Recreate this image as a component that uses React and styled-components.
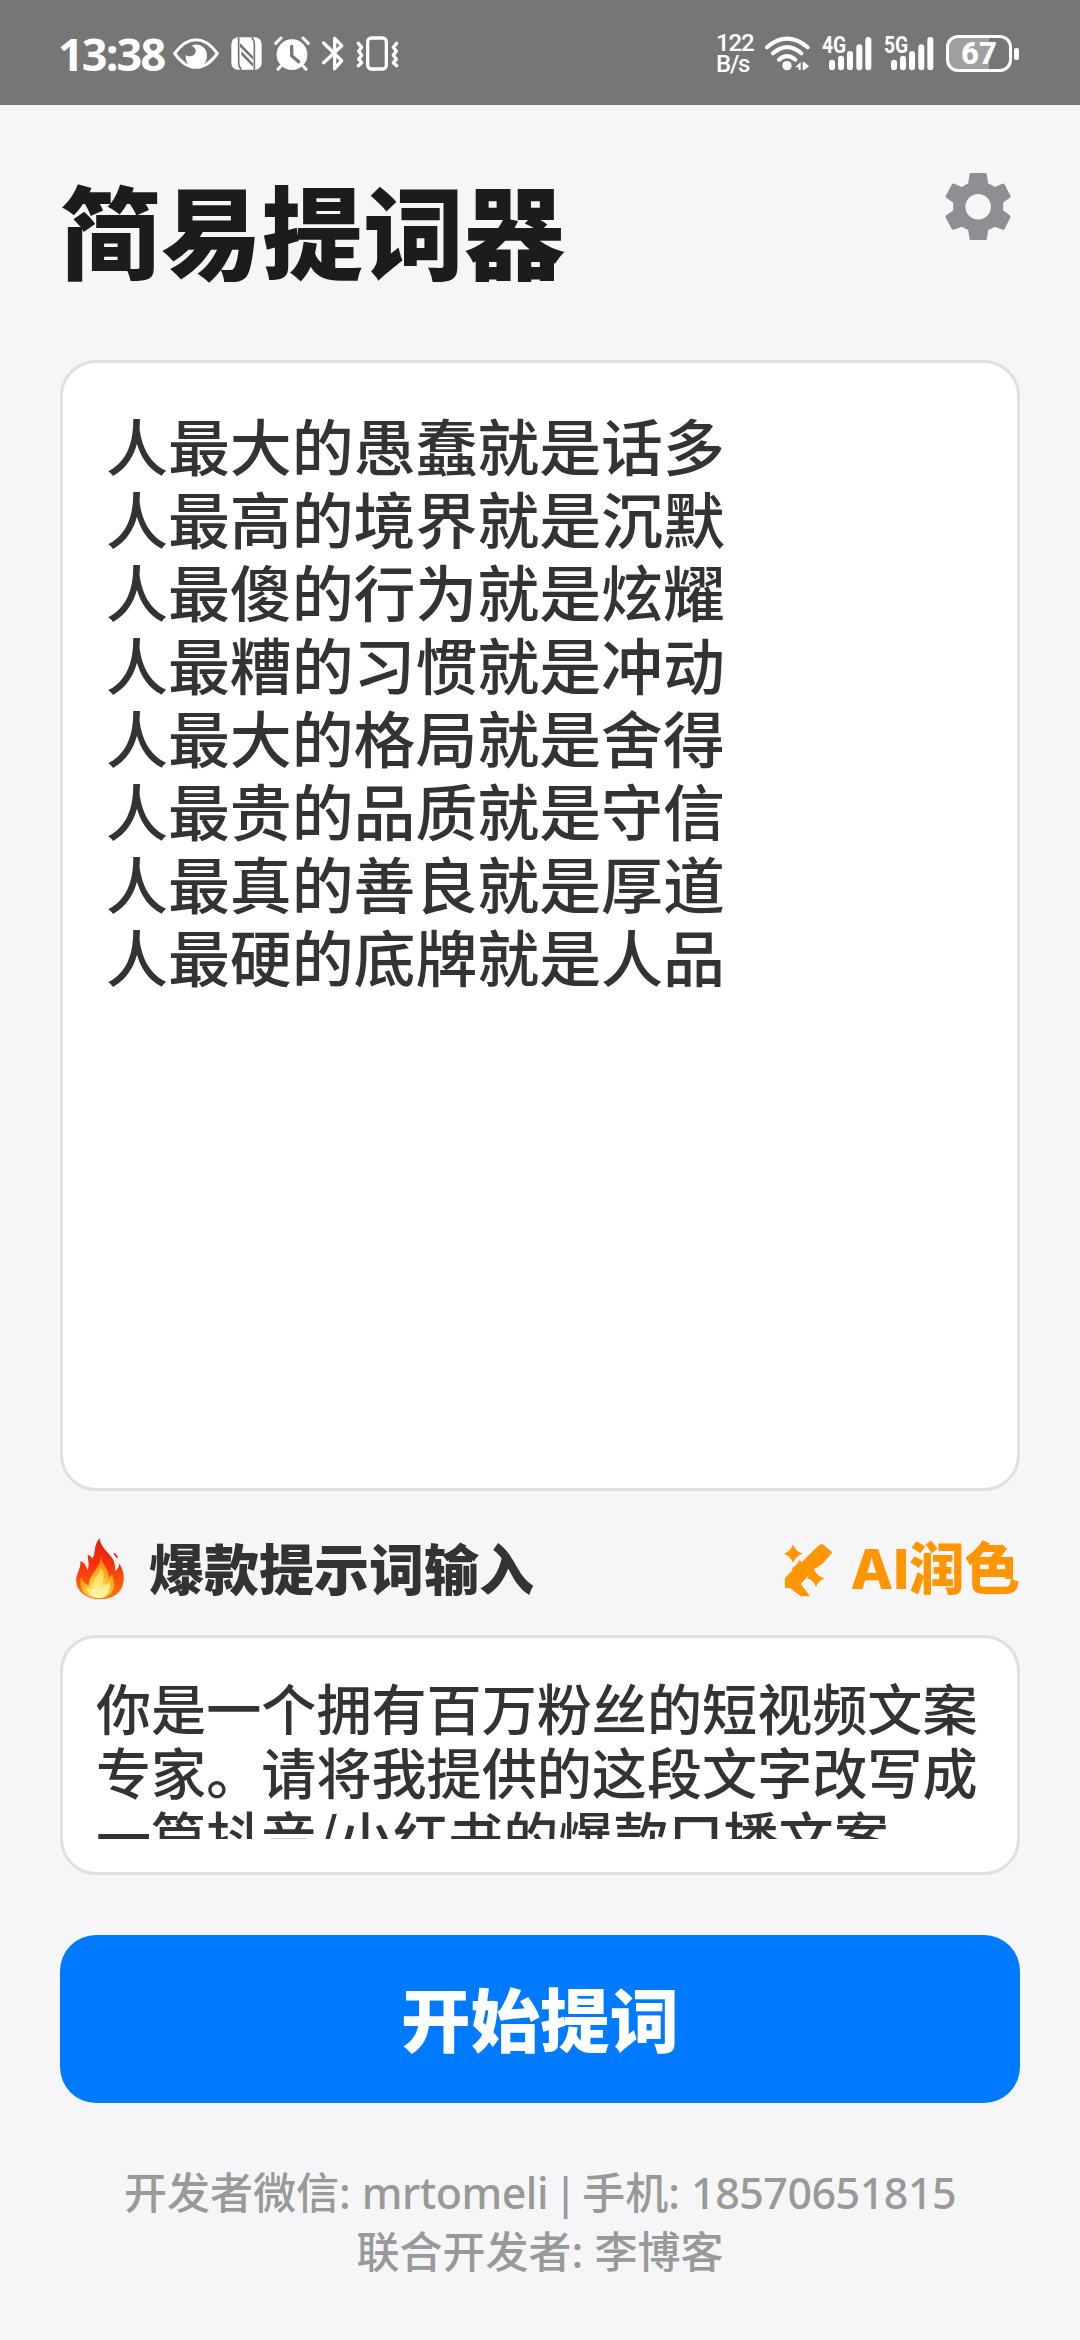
import styled, { createGlobalStyle } from 'styled-components';

const GlobalStyle = createGlobalStyle`
  * {
    box-sizing: border-box;
  }
  body {
    margin: 0;
    background: #f6f6f8;
    font-family: "Noto Sans", "Noto Sans CJK SC", sans-serif;
  }
`;

const Page = styled.div`
  display: flex;
  flex-direction: column;
  width: 1080px;
  height: 2340px;
  background: #f6f6f8;
  overflow: hidden;
`;

const StatusBar = styled.header`
  display: flex;
  justify-content: space-between;
  height: 105px;
  padding: 0 61px 0 58px;
  background: #767676;
  color: #fff;
`;

const StatusGroup = styled.div`
  display: flex;
  align-items: center;
  gap: 12px;
  height: 107px;
`;

const Time = styled.span`
  width: 108px;
  margin-right: -5px;
  font: 700 45px/50px "Open Sans", sans-serif;
  letter-spacing: -1.9px;
  white-space: nowrap;
`;

const Speed = styled.div`
  width: 37px;
  font: 500 24px/21px Roboto, sans-serif;
  letter-spacing: -1.2px;
  white-space: nowrap;
`;

const SignalWrapper = styled.div`
  display: flex;
  position: relative;
  width: 50px;
  height: 35px;
`;

const Network = styled.span`
  position: absolute;
  left: 0;
  top: -2px;
  font: 700 23px/23px Roboto, sans-serif;
  transform: scaleX(0.84);
  transform-origin: left;
`;

const Battery = styled.div`
  display: flex;
  align-items: center;
  gap: 2px;
`;

const BatteryBody = styled.div`
  display: flex;
  align-items: center;
  justify-content: center;
  width: 66px;
  height: 37px;
  border: 3px solid #fff;
  border-radius: 12px;
  background: linear-gradient(90deg, #a0a0a0 67%, #767676 67%);
  font: 800 31px/31px Roboto, sans-serif;
`;

const BatteryTip = styled.div`
  width: 5px;
  height: 12px;
  border-radius: 2px;
  background: #fff;
`;

const Main = styled.main`
  display: flex;
  flex-direction: column;
  padding: 0 60px;
  font-family: "Noto Sans CJK SC", sans-serif;
`;

const TitleBar = styled.div`
  display: flex;
  justify-content: space-between;
  height: 255px;
  padding: 63px 9px 0 0;
`;

const Title = styled.h1`
  margin: 0;
  font-size: 101px;
  line-height: 120px;
  font-weight: 900;
  color: #1c1c1e;
`;

const SettingsIcon = styled.svg`
  width: 66px;
  height: 67px;
  margin-top: 5px;
  fill: #8e8e93;
`;

const Card = styled.section`
  border: 3px solid #e0e0e2;
  border-radius: 36px;
  background: #fff;
  color: #333;
`;

const Editor = styled(Card)`
  height: 1131px;
  padding: 45px 43px;
  font-size: 61.9px;
  line-height: 73.05px;
  font-weight: 500;
`;

const PromptHeader = styled.div`
  display: flex;
  justify-content: space-between;
  align-items: center;
  height: 144px;
  padding-top: 6px;
`;

const PromptLabel = styled.h2`
  display: flex;
  align-items: center;
  gap: 25px;
  margin: 0 0 0 16px;
  font-size: 55px;
  line-height: 64px;
  font-weight: 900;
  color: #333;

  svg {
    margin-top: 6px;
  }
`;

const PolishButton = styled.button`
  display: flex;
  align-items: center;
  gap: 18px;
  padding: 5px 0 0;
  border: none;
  background: none;
  font: 800 55.5px/64px Inter, "Noto Sans CJK SC", sans-serif;
  color: #ff9500;

  svg {
    margin-top: 2px;
  }
`;

const PromptCard = styled(Card)`
  height: 240px;
  padding: 36px 33px 33px;
`;

const PromptText = styled.div`
  height: 165px;
  overflow: hidden;
  font-size: 55.1px;
  line-height: 64px;
  font-weight: 500;
  white-space: nowrap;
`;

const StartButton = styled.button`
  height: 168px;
  margin-top: 60px;
  padding: 0 0 4px;
  border: none;
  border-radius: 36px;
  background: #007aff;
  color: #fff;
  font: 900 69.5px/80px "Noto Sans CJK SC", sans-serif;
`;

const Footer = styled.footer`
  margin-top: 61px;
  font: 500 43px/58.5px "Noto Sans", "Noto Sans CJK SC", sans-serif;
  color: #999;
  text-align: center;
  white-space: nowrap;
`;

const Contact = styled.span`
  letter-spacing: -0.5px;
`;

const Divider = styled.span`
  margin: 0 -6px 0 -5px;
`;

const lines = [
  '人最大的愚蠢就是话多',
  '人最高的境界就是沉默',
  '人最傻的行为就是炫耀',
  '人最糟的习惯就是冲动',
  '人最大的格局就是舍得',
  '人最贵的品质就是守信',
  '人最真的善良就是厚道',
  '人最硬的底牌就是人品',
];

const prompt = [
  '你是一个拥有百万粉丝的短视频文案',
  '专家。请将我提供的这段文字改写成',
  '一篇抖音/小红书的爆款口播文案',
];

const EyeIcon = () => (
  <svg width="46" height="31" viewBox="0 0 138 93">
    <path d="M5 46Q35 5 69 5T133 46Q104 88 69 88T5 46Z" fill="none" stroke="#fff" strokeWidth="9" strokeLinejoin="round" />
    <path d="M56 23C76 13 102 27 102 52C102 76 88 88 69 88S37 75 38 51C50 60 68 53 68 40C68 31 62 26 56 23Z" fill="#fff" />
  </svg>
);

const NfcIcon = () => (
  <svg width="31" height="33" viewBox="0 0 93 99">
    <rect x="1" y="1" width="91" height="97" rx="20" fill="#fff" />
    <path d="M23 1V78Q23 91 31 98M70 98V22Q70 8 62 1" fill="none" stroke="#767676" strokeWidth="5" />
    <path d="M27 18L66 58V68L27 30ZM31 42L66 79V89L31 54Z" fill="#767676" />
  </svg>
);

const AlarmIcon = () => (
  <svg width="36" height="35" viewBox="0 0 108 105">
    <circle cx="54" cy="56" r="46" fill="#fff" />
    <path d="M5 22L21 6M87 6L103 22M20 91L12 100M88 91L96 100" stroke="#fff" strokeWidth="9" strokeLinecap="round" />
    <path d="M53 31V59L74 77" fill="none" stroke="#767676" strokeWidth="10" strokeLinecap="round" />
  </svg>
);

const BluetoothIcon = () => (
  <svg width="22" height="35" viewBox="0 0 66 105">
    <path d="M5 21L59 74L38 98V7L59 29L5 80" fill="none" stroke="#fff" strokeWidth="10" strokeLinecap="round" strokeLinejoin="round" />
  </svg>
);

const VibrateIcon = () => (
  <svg width="43" height="35" viewBox="0 0 129 105">
    <rect x="35" y="6" width="56" height="93" rx="11" fill="none" stroke="#fff" strokeWidth="10" />
    <path d="M7 22L17 34L8 46L17 58L8 70L17 80L7 89M122 22L112 34L121 46L112 58L121 70L112 80L122 89" fill="none" stroke="#fff" strokeWidth="10" strokeLinecap="round" strokeLinejoin="round" />
  </svg>
);

const WifiIcon = () => (
  <svg width="45" height="35" viewBox="0 0 135 105">
    <path d="M6 34Q66 -18 128 34M24 52Q66 15 109 52M42 71Q66 50 91 71" fill="none" stroke="#fff" strokeWidth="12" strokeLinecap="round" />
    <circle cx="66" cy="89" r="14" fill="#fff" />
    <path d="M107 78V102H101V94H91ZM113 78H118L132 91L118 102H113Z" fill="#fff" />
  </svg>
);

const Signal = ({ network }) => (
  <SignalWrapper>
    <svg width="50" height="35" viewBox="0 0 150 105">
      <path d="M30 80V94M57 68V94M84 54V94M112 34V94M139 12V94" stroke="#fff" strokeWidth="18" strokeLinecap="round" />
    </svg>
    <Network>{network}</Network>
  </SignalWrapper>
);

const FireIcon = () => (
  <svg width="48" height="62" viewBox="0 0 144 186">
    <defs>
      <linearGradient id="flame" x1="0" y1="0" x2="0" y2="1">
        <stop offset="0" stopColor="#e11f12" />
        <stop offset="0.45" stopColor="#f6330c" />
        <stop offset="1" stopColor="#ff7a0c" />
      </linearGradient>
      <radialGradient id="core" cx="0.5" cy="0.85" r="0.75">
        <stop offset="0" stopColor="#fff9b0" />
        <stop offset="0.45" stopColor="#ffc02f" />
        <stop offset="1" stopColor="#ff7f0f" />
      </radialGradient>
      <linearGradient id="tongue" x1="0" y1="0" x2="0" y2="1">
        <stop offset="0" stopColor="#ffd84a" />
        <stop offset="1" stopColor="#fff8a8" />
      </linearGradient>
    </defs>
    <path d="M70 1C74 24 92 40 107 58C116 70 118 83 117 99C126 94 130 85 129 76C142 94 147 117 140 142C133 168 108 184 72 184C33 184 5 164 1 133C-2 107 16 94 13 69C25 74 31 84 34 96C42 80 35 65 35 51C43 53 47 57 49 62C61 44 51 25 70 1Z" fill="url(#flame)" />
    <path d="M112 44C121 46 126 53 126 62C121 58 114 53 112 44Z" fill="#e42b16" />
    <path d="M76 55C75 76 99 91 99 119C102 117 106 112 108 107C119 137 122 172 72 181C21 177 9 157 15 119C21 132 29 137 38 143C38 109 73 91 76 55Z" fill="url(#core)" />
    <path d="M74 91C88 106 82 126 79 143C90 141 96 136 101 130C107 157 94 179 71 180C48 179 34 164 33 150C40 155 48 154 53 149C49 126 67 116 74 91Z" fill="url(#tongue)" />
  </svg>
);

const WandIcon = () => (
  <svg width="48" height="54" viewBox="43 38 144 162" fill="#ff9500">
    <path d="M70 42Q76 62 98 70Q77 78 70 98Q64 77 43 70Q64 63 70 42Z" />
    <path d="M157 40L188 66L158 101L133 116Q141 138 164 144Q145 151 139 171Q134 151 113 144L118 134L93 161L121 198H93L61 173H46V143L70 118L65 114Q82 107 90 89L96 96L145 47Z" />
  </svg>
);

const App = () => {
  return (
    <>
      <GlobalStyle />
      <Page>
        <StatusBar>
          <StatusGroup>
            <Time>13:38</Time>
            <EyeIcon />
            <NfcIcon />
            <AlarmIcon />
            <BluetoothIcon />
            <VibrateIcon />
          </StatusGroup>
          <StatusGroup>
            <Speed>122<br />B/s</Speed>
            <WifiIcon />
            <Signal network="4G" />
            <Signal network="5G" />
            <Battery>
              <BatteryBody>67</BatteryBody>
              <BatteryTip />
            </Battery>
          </StatusGroup>
        </StatusBar>
        <Main>
          <TitleBar>
            <Title>简易提词器</Title>
            <SettingsIcon viewBox="135 69 197 202">
              <path
                fillRule="evenodd"
                d="M212 69H256Q259 69 260 72L264 101Q275 105 284 111L309 101Q312 101 313 103L332 138Q332 141 330 143L309 159Q311 170 309 181L330 197Q332 200 331 203L313 239Q311 241 308 240L284 231Q275 237 264 241L260 268Q259 271 256 271H212Q209 271 208 268L204 241Q194 237 185 231L160 240Q157 241 155 239L136 203Q135 200 137 197L159 181Q158 170 159 159L137 143Q135 141 136 138L155 103Q157 100 160 101L185 111Q194 105 204 101L208 72Q209 69 212 69ZM234 132A38 38 0 1 0 234 209A38 38 0 1 0 234 132Z"
              />
            </SettingsIcon>
          </TitleBar>
          <Editor>
            {lines.map((line) => <div key={line}>{line}</div>)}
          </Editor>
          <PromptHeader>
            <PromptLabel>
              <FireIcon />
              爆款提示词输入
            </PromptLabel>
            <PolishButton>
              <WandIcon />
              AI润色
            </PolishButton>
          </PromptHeader>
          <PromptCard>
            <PromptText>
              {prompt.map((line) => <div key={line}>{line}</div>)}
            </PromptText>
          </PromptCard>
          <StartButton>开始提词</StartButton>
          <Footer>
            <div>
              开发者微信: <Contact>mrtomeli <Divider>|</Divider></Contact> 手机: <Contact>18570651815</Contact>
            </div>
            <div>联合开发者: 李博客</div>
          </Footer>
        </Main>
      </Page>
    </>
  );
}

export default App;
